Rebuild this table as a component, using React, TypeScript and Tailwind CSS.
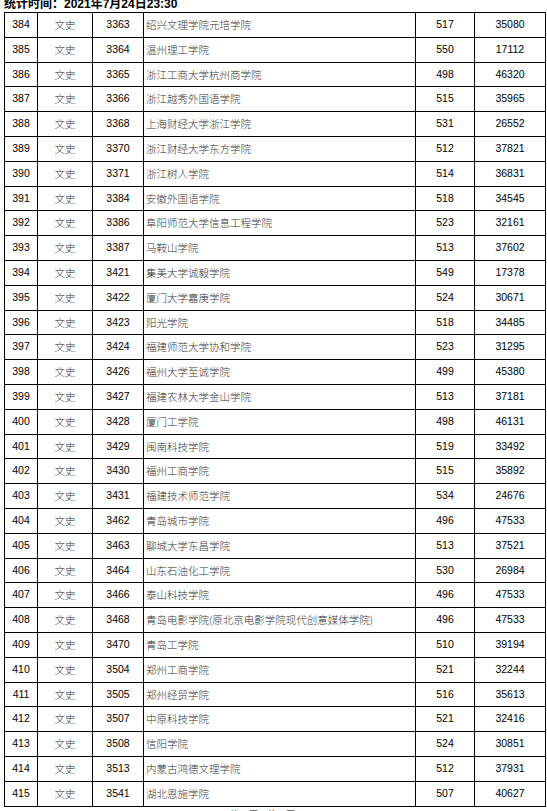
const rows: [string, string, string, string, string][] = [
  ["384", "3363", "绍兴文理学院元培学院", "517", "35080"],
  ["385", "3364", "温州理工学院", "550", "17112"],
  ["386", "3365", "浙江工商大学杭州商学院", "498", "46320"],
  ["387", "3366", "浙江越秀外国语学院", "515", "35965"],
  ["388", "3368", "上海财经大学浙江学院", "531", "26552"],
  ["389", "3370", "浙江财经大学东方学院", "512", "37821"],
  ["390", "3371", "浙江树人学院", "514", "36831"],
  ["391", "3384", "安徽外国语学院", "518", "34545"],
  ["392", "3386", "阜阳师范大学信息工程学院", "523", "32161"],
  ["393", "3387", "马鞍山学院", "513", "37602"],
  ["394", "3421", "集美大学诚毅学院", "549", "17378"],
  ["395", "3422", "厦门大学嘉庚学院", "524", "30671"],
  ["396", "3423", "阳光学院", "518", "34485"],
  ["397", "3424", "福建师范大学协和学院", "523", "31295"],
  ["398", "3426", "福州大学至诚学院", "499", "45380"],
  ["399", "3427", "福建农林大学金山学院", "513", "37181"],
  ["400", "3428", "厦门工学院", "498", "46131"],
  ["401", "3429", "闽南科技学院", "519", "33492"],
  ["402", "3430", "福州工商学院", "515", "35892"],
  ["403", "3431", "福建技术师范学院", "534", "24676"],
  ["404", "3462", "青岛城市学院", "496", "47533"],
  ["405", "3463", "聊城大学东昌学院", "513", "37521"],
  ["406", "3464", "山东石油化工学院", "530", "26984"],
  ["407", "3466", "泰山科技学院", "496", "47533"],
  ["408", "3468", "青岛电影学院(原北京电影学院现代创意媒体学院)", "496", "47533"],
  ["409", "3470", "青岛工学院", "510", "39194"],
  ["410", "3504", "郑州工商学院", "521", "32244"],
  ["411", "3505", "郑州经贸学院", "516", "35613"],
  ["412", "3507", "中原科技学院", "521", "32416"],
  ["413", "3508", "信阳学院", "524", "30851"],
  ["414", "3513", "内蒙古鸿德文理学院", "512", "37931"],
  ["415", "3541", "湖北恩施学院", "507", "40627"],
];

const num = "border-[1.5px] border-black text-center text-[10.5px] text-black font-['Liberation_Sans',Arial,sans-serif]";
const cjk = "border-[1.5px] border-black text-[10.5px] text-[#333] font-['Noto_Sans_CJK_SC',sans-serif] font-light";

export default function App() {
  return (
    <div className="w-[547px] h-[811px] overflow-hidden bg-white pl-[4px]">
      <div className="h-[12px] overflow-hidden">
        <div className="-mt-[4px] text-[12px] leading-[16px] font-bold text-black font-['Liberation_Sans','Noto_Sans_CJK_SC',sans-serif]">
          统计时间：2021年7月24日23:30
        </div>
      </div>
      <table className="w-[541px] border-collapse table-fixed">
        <colgroup>
          <col className="w-[33px]" />
          <col className="w-[55px]" />
          <col className="w-[51px]" />
          <col className="w-[272px]" />
          <col className="w-[59px]" />
          <col className="w-[71px]" />
        </colgroup>
        <tbody>
          {rows.map(([no, cls, name, score, rank]) => (
            <tr key={no} className="h-[24.8px]">
              <td className={num}>{no}</td>
              <td className={cjk + " text-center"}>文史</td>
              <td className={num}>{cls}</td>
              <td className={cjk + " pl-[2px] whitespace-nowrap"}>{name}</td>
              <td className={num}>{score}</td>
              <td className={num}>{rank}</td>
            </tr>
          ))}
        </tbody>
      </table>
      <div className="pl-[226px] pt-[2px] text-[9px] leading-[12px] text-black font-['Noto_Sans_CJK_SC',sans-serif]">
        第16页，共18页
      </div>
    </div>
  );
}
